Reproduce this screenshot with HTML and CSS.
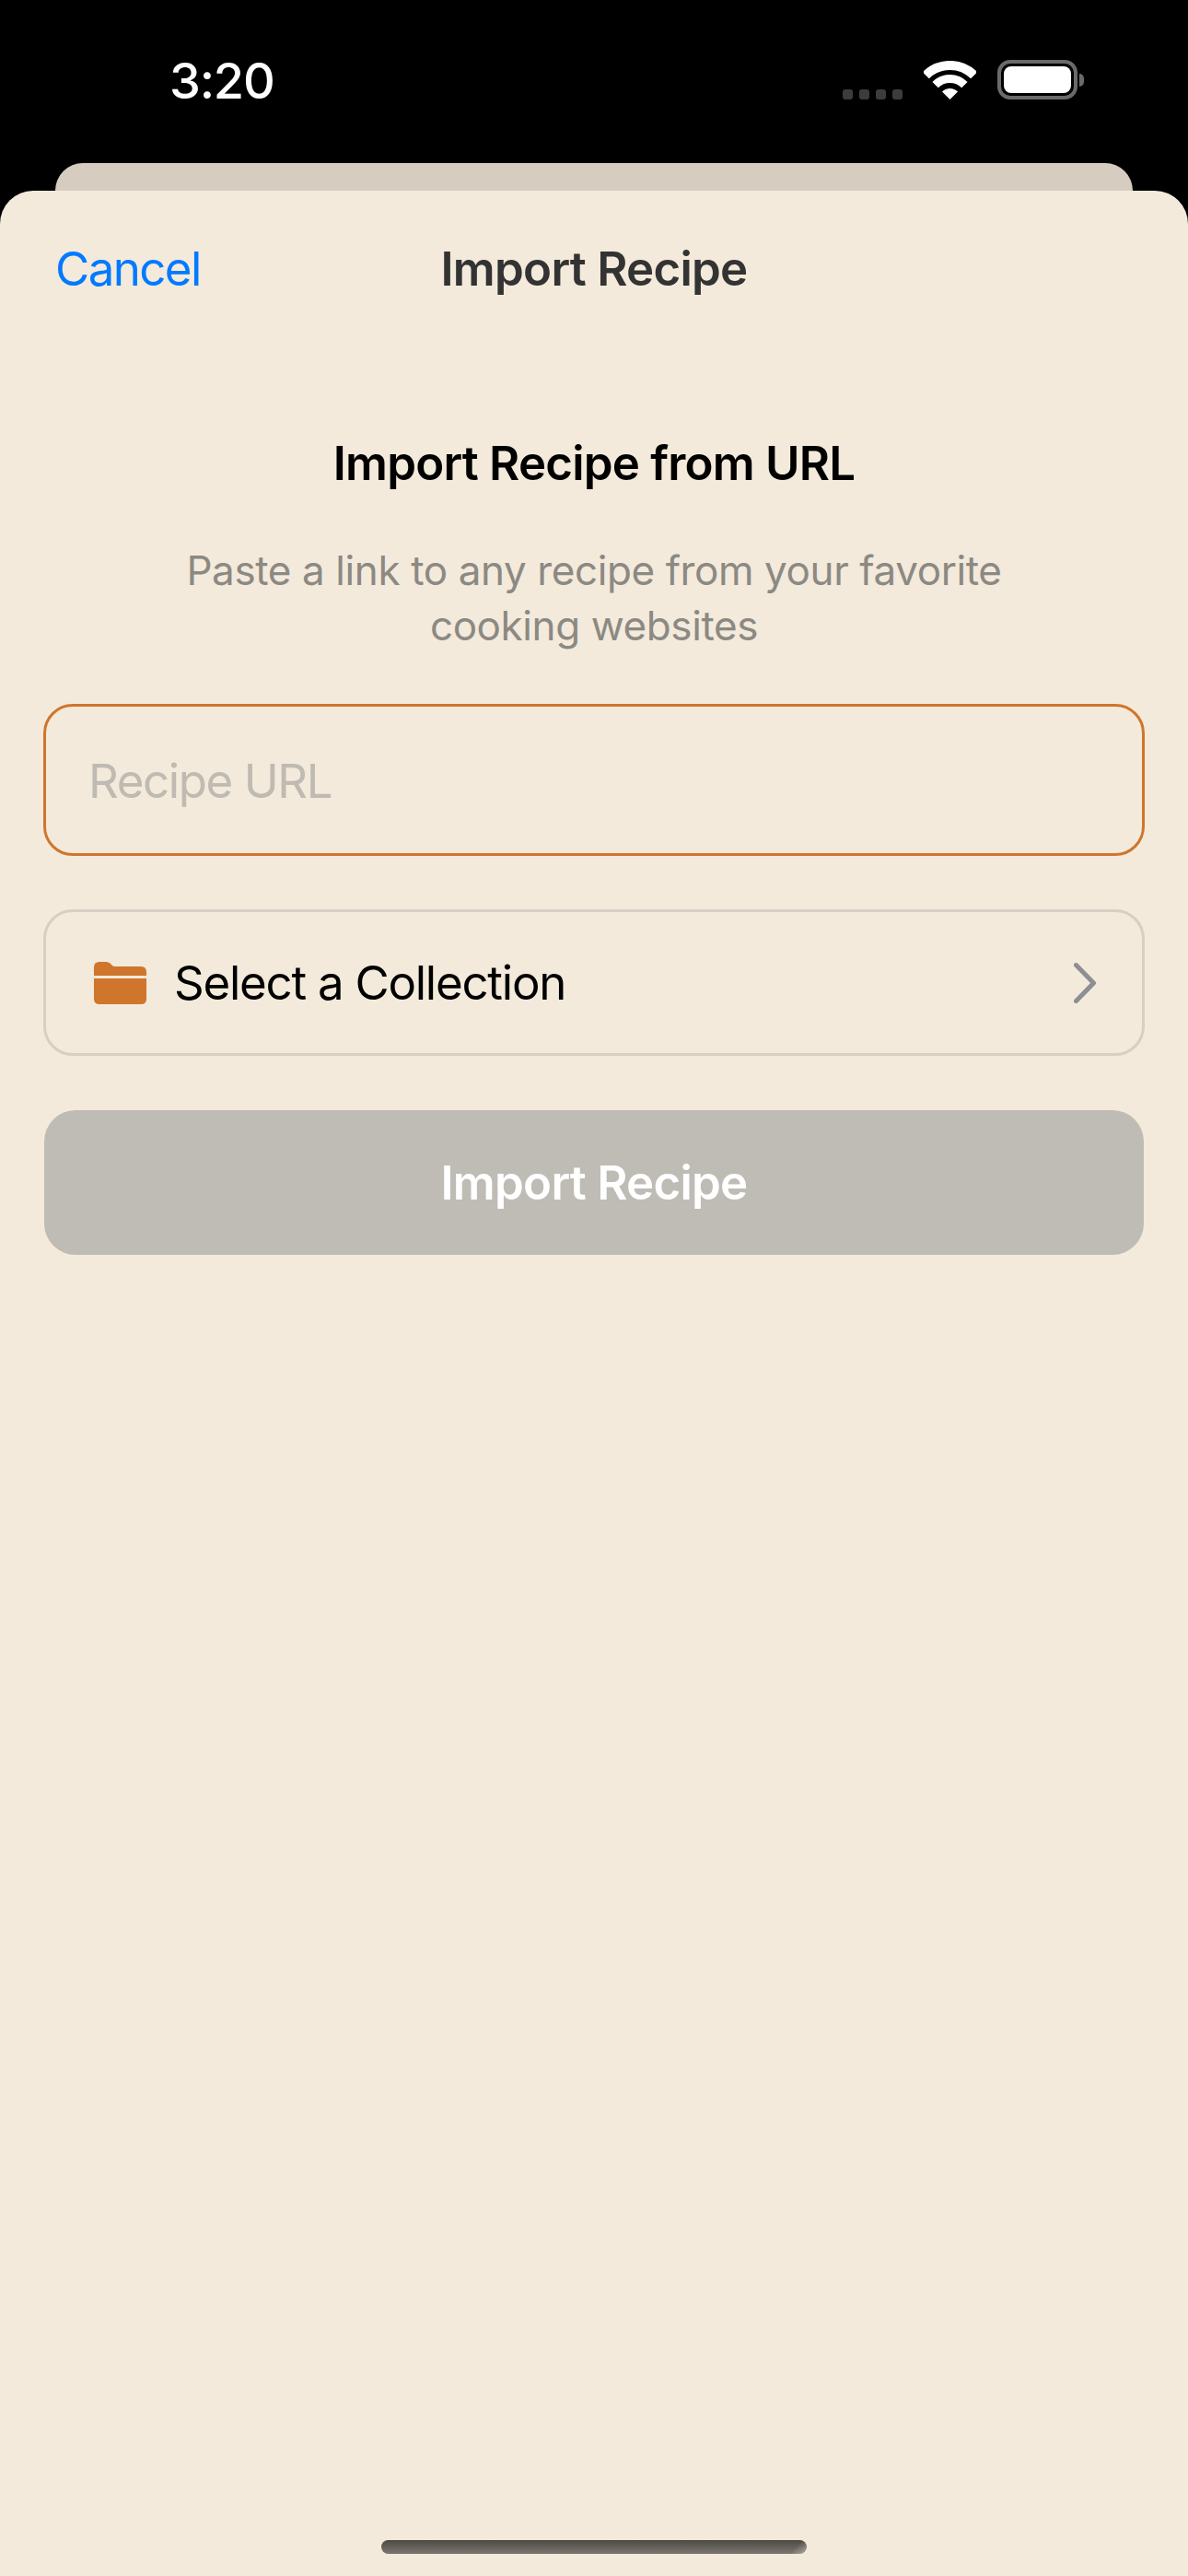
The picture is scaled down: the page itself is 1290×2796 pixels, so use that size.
FILE: index.html
```html
<!DOCTYPE html>
<html lang="en">
<head>
<meta charset="utf-8">
<title>Import Recipe</title>
<link rel="stylesheet" href="styles.css">
</head>
<body>
<div class="phone">
  <header class="status">
    <span class="time">3:20</span>
    <div class="status-icons">
      <div class="signal"><i></i><i></i><i></i><i></i></div>
      <svg class="wifi" width="57" height="42" viewBox="0 0 57 42" aria-hidden="true">
        <path d="M2.3 15.8A37 37 0 0 1 54.7 15.8" fill="none" stroke="#fff" stroke-width="10"/>
        <path d="M12.6 26.1A22.5 22.5 0 0 1 44.4 26.1" fill="none" stroke="#fff" stroke-width="9"/>
        <path d="M28.5 42L20 33.5A12 12 0 0 1 37 33.5Z" fill="#fff"/>
      </svg>
      <div class="battery"><div class="battery-body"><div class="battery-fill"></div></div><div class="battery-nub"></div></div>
    </div>
  </header>
  <div class="back-card"></div>
  <main class="sheet">
    <nav class="navbar">
      <span class="cancel">Cancel</span>
      <h1 class="nav-title">Import Recipe</h1>
    </nav>
    <section class="form">
      <h2 class="heading">Import Recipe from URL</h2>
      <p class="subtitle">Paste a link to any recipe from your favorite<br>cooking websites</p>
      <div class="field"><span class="placeholder">Recipe URL</span></div>
      <div class="picker">
        <svg class="folder" width="57" height="46" viewBox="0 0 57 46" aria-hidden="true">
          <path d="M0 15V6Q0 0 6 0H13Q16 0 18 2L20 4Q21 5 23 5H51Q57 5 57 11V15Z" fill="#d0752c"/>
          <path d="M0 18H57V40Q57 46 51 46H6Q0 46 0 40Z" fill="#d0752c"/>
        </svg>
        <span class="picker-label">Select a Collection</span>
        <svg class="chevron" width="24" height="44" viewBox="0 0 24 44" aria-hidden="true">
          <path d="M2.5 2.5L21.5 22L2.5 41.5" fill="none" stroke="#8e8e93" stroke-width="5" stroke-linecap="round" stroke-linejoin="round"/>
        </svg>
      </div>
      <div class="import-button">Import Recipe</div>
    </section>
    <div class="home-indicator"></div>
  </main>
</div>
</body>
</html>
```
FILE: styles.css
```css
* { box-sizing: border-box; }
html, body { margin: 0; padding: 0; background: #000; }
body { font-family: Inter, "Liberation Sans", sans-serif; }
.phone { width: 1290px; height: 2796px; display: flex; flex-direction: column; overflow: hidden; background: #000; }

.status { height: 177px; flex: none; display: flex; justify-content: space-between; align-items: flex-start; padding: 56px 113px 0 184px; }
.time { font-size: 54px; line-height: 64px; font-weight: 500; color: #fff; letter-spacing: -1.2px; }
.status-icons { display: flex; align-items: flex-end; margin-top: 9px; height: 43px; }
.signal { display: flex; gap: 7px; margin-right: 23px; }
.signal i { display: block; width: 11px; height: 11px; border-radius: 3px; background: #3c3c3c; }
.wifi { display: block; margin-right: 23px; margin-bottom: 0; }
.battery { display: flex; align-items: center; }
.battery-body { width: 87px; height: 43px; padding: 3px; border: 4px solid #6a6a6a; border-radius: 14px; }
.battery-fill { width: 100%; height: 100%; background: #fff; border-radius: 8px; }
.battery-nub { width: 5px; height: 14px; margin-left: 2px; background: #6a6a6a; border-radius: 0 5px 5px 0; }

.back-card { height: 30px; flex: none; margin: 0 60px; background: #d6cdc0; border-radius: 33px 33px 0 0; }

.sheet { flex: 1; display: flex; flex-direction: column; background: #f3eadb; border-radius: 36px 36px 0 0; }
.navbar { height: 168px; flex: none; padding: 0 60px; display: flex; align-items: center; position: relative; }
.cancel { font-size: 51px; color: #007aff; letter-spacing: -1.6px; }
.nav-title { position: absolute; left: 0; right: 0; margin: 0; text-align: center; font-size: 51px; font-weight: 600; color: #333; letter-spacing: -0.75px; }

.form { padding: 96px 47px 0; display: flex; flex-direction: column; }
.heading { margin: 0; text-align: center; font-size: 51px; line-height: 64px; font-weight: 600; color: #000; letter-spacing: -0.8px; }
.subtitle { margin: 54px 0 0; text-align: center; font-size: 44px; line-height: 60px; color: #8c8983; letter-spacing: -0.4px; }
.field { margin-top: 55px; height: 165px; border: 3px solid #d0752c; border-radius: 32px; padding: 2px 46px 0; display: flex; align-items: center; }
.placeholder { font-size: 51px; color: #bfbab2; letter-spacing: -1.4px; }
.picker { margin-top: 58px; height: 159px; border: 3px solid #d6cfc4; border-radius: 32px; padding: 0 50px 0 52px; display: flex; align-items: center; }
.folder { flex: none; }
.picker-label { margin-left: 30px; font-size: 51px; color: #000; flex: 1; letter-spacing: -1.25px; }
.chevron { flex: none; }
.import-button { margin: 59px 1px 0; height: 157px; border-radius: 34px; background: #bfbbb5; color: #fff; font-size: 51px; font-weight: 600; letter-spacing: -0.75px; display: flex; align-items: center; justify-content: center; }

.home-indicator { margin: auto auto 24px; width: 462px; height: 15px; border-radius: 8px; background: linear-gradient(135deg, transparent 96%, rgba(243,234,219,.45)), linear-gradient(180deg, #4c4a42, #7b7770); }
```
